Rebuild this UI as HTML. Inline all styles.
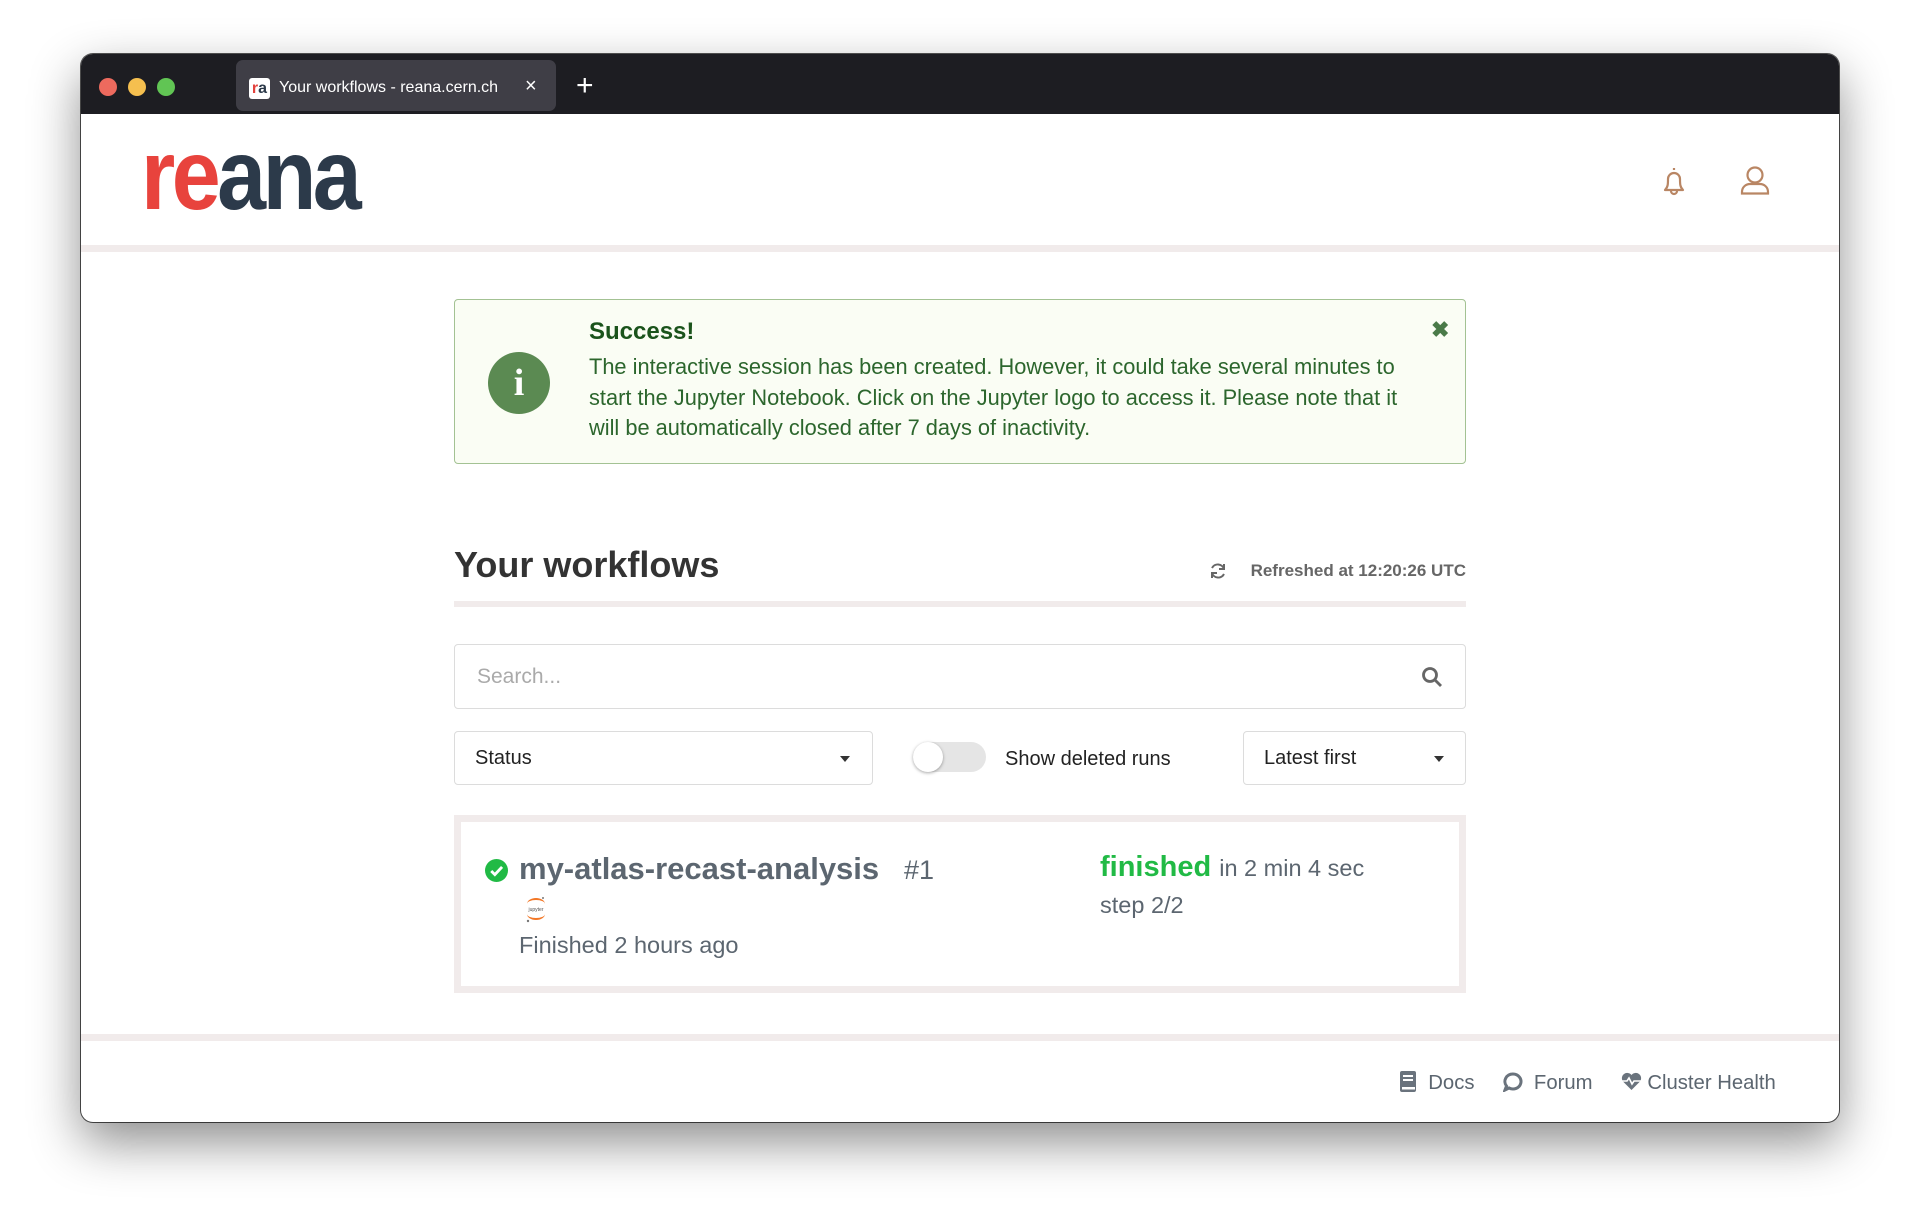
<!DOCTYPE html>
<html><head><meta charset="utf-8"><style>
*{box-sizing:border-box;margin:0;padding:0}
body{width:1920px;height:1229px;background:#fff;font-family:"Liberation Sans",sans-serif;position:relative;overflow:hidden}
.win{position:absolute;left:81px;top:54px;width:1758px;height:1068px;border-radius:12px;background:#fff;box-shadow:0 20px 50px rgba(0,0,0,.45),0 0 0 1px #555;overflow:hidden}
.tb{position:absolute;left:0;top:0;width:100%;height:60px;background:#1d1d22}
.dot{position:absolute;top:24px;width:18px;height:18px;border-radius:50%}
.tab{position:absolute;left:155px;top:6px;width:320px;height:51px;background:#3f3e46;border-radius:7px;color:#fff;font-size:16px}
.abs{position:absolute}
.sep{position:absolute;left:0;width:100%;height:7px;background:#f1ebeb}
.a{position:absolute;left:373px;top:245px;width:1012px;height:165px;background:#fafdf4;border:1.5px solid #a3c293;border-radius:4px;color:#2c662d}
.box{position:absolute;border:1.5px solid #dcdcdc;border-radius:4px;background:#fff;font-size:20px;color:#222}
.caret{position:absolute;width:0;height:0;border-left:5px solid transparent;border-right:5px solid transparent;border-top:6px solid #333}
</style></head><body>
<div class="win">
 <div class="tb">
  <div class="dot" style="left:18px;background:#ed6a5e"></div>
  <div class="dot" style="left:47px;background:#f5bf4f"></div>
  <div class="dot" style="left:76px;background:#61c554"></div>
  <div class="tab">
   <div class="abs" style="left:13px;top:18px;width:21px;height:21px;background:#fff;border-radius:3px;font:bold 16px 'Liberation Sans';line-height:21px;text-align:center"><span style="color:#e2413c">r</span><span style="color:#2c3a4a">a</span></div>
   <div class="abs" style="left:43px;top:19px">Your workflows - reana.cern.ch</div>
   <div class="abs" style="left:289px;top:15px;font-size:20px">×</div>
  </div>
  <div class="abs" style="left:495px;top:15px;color:#fff;font-size:30px;font-weight:300">+</div>
 </div>
 <div class="abs" style="left:60px;top:71px;font:bold 100px/1 'Liberation Sans';letter-spacing:-4px;transform:scaleX(0.88);transform-origin:left top;white-space:nowrap"><span style="color:#e8433d">re</span><span style="color:#2c3a4a">ana</span></div>
 <svg class="abs" style="left:1578px;top:111px" width="30" height="32" viewBox="0 0 30 32" fill="none" stroke="#b98664" stroke-width="2.2" stroke-linejoin="round"><path d="M15 3v2M6 25c3-3 3-6 3-11a6 6 0 0 1 12 0c0 5 0 8 3 11z"/><path d="M12 26a3 3 0 0 0 6 0"/></svg>
 <svg class="abs" style="left:1657px;top:110px" width="34" height="34" viewBox="0 0 34 34" fill="none" stroke="#b98664" stroke-width="2.2"><circle cx="17" cy="11" r="7.5"/><path d="M4 28c0-5 4-8 8-8h10c4 0 8 3 8 8v1.5H4z"/></svg>
 <div class="sep" style="top:191px"></div>

 <div class="a">
  <div class="abs" style="left:33px;top:52px;width:62px;height:62px;border-radius:50%;background:#5b8a52;color:#fff;font:bold 38px/62px 'Liberation Serif';text-align:center">i</div>
  <div class="abs" style="left:134px;top:18px;font-size:24px;font-weight:bold;color:#1a531b">Success!</div>
  <div class="abs" style="left:134px;top:52px;width:880px;font-size:21.8px;line-height:30.6px;color:#2c662d;white-space:nowrap">The interactive session has been created. However, it could take several minutes to<br>start the Jupyter Notebook. Click on the Jupyter logo to access it. Please note that it<br>will be automatically closed after 7 days of inactivity.</div>
  <div class="abs" style="left:976px;top:17px;font-size:22px;font-weight:bold;color:#4a7a48">✖</div>
 </div>

 <div class="abs" style="left:373px;top:490px;font-size:36px;font-weight:bold;color:#333">Your workflows</div>
 <svg class="abs" style="left:1127px;top:507px" width="20" height="20" viewBox="0 0 20 20" fill="none" stroke="#666" stroke-width="2"><path d="M16 8a6.5 6.5 0 0 0-12-1M4 12a6.5 6.5 0 0 0 12 1"/><path d="M16 3v5h-5M4 17v-5h5"/></svg>
 <div class="abs" style="left:1160px;top:507px;width:225px;text-align:right;font-size:17px;font-weight:bold;color:#666">Refreshed at 12:20:26 UTC</div>
 <div class="sep" style="top:547px;left:373px;width:1012px;height:6px"></div>

 <div class="box" style="left:373px;top:590px;width:1012px;height:65px">
  <div class="abs" style="left:22px;top:20px;color:#aaa;font-size:21px">Search...</div>
  <svg class="abs" style="left:965px;top:20px" width="24" height="24" viewBox="0 0 24 24" fill="none" stroke="#666" stroke-width="2.8"><circle cx="10" cy="10" r="6.5"/><path d="M15 15l6 6"/></svg>
 </div>
 <div class="box" style="left:373px;top:677px;width:419px;height:54px"><div class="abs" style="left:20px;top:15px">Status</div><div class="caret" style="left:385px;top:24px"></div></div>
 <div class="abs" style="left:832px;top:688px;width:73px;height:30px;border-radius:15px;background:#e5e5e5"></div>
 <div class="abs" style="left:832px;top:688px;width:30px;height:30px;border-radius:50%;background:#fff;box-shadow:0 1px 3px rgba(0,0,0,.35)"></div>
 <div class="abs" style="left:924px;top:694px;font-size:20px;color:#222">Show deleted runs</div>
 <div class="box" style="left:1162px;top:677px;width:223px;height:54px"><div class="abs" style="left:20px;top:15px">Latest first</div><div class="caret" style="left:190px;top:24px"></div></div>

 <div class="abs" style="left:373px;top:761px;width:1012px;height:178px;border:7px solid #f1ebeb;background:#fff"></div>
 <svg class="abs" style="left:404px;top:805px" width="23" height="23" viewBox="0 0 24 24"><circle cx="12" cy="12" r="12" fill="#21ba45"/><path d="M6.5 12.5l3.8 3.8 7.5-8" fill="none" stroke="#fff" stroke-width="3"/></svg>
 <div class="abs" style="left:438px;top:797px;font-size:31px;font-weight:bold;color:#5c6670">my-atlas-recast-analysis</div>
 <div class="abs" style="left:823px;top:801px;font-size:27px;color:#5c6670">#1</div>
 <svg class="abs" style="left:440px;top:840px" width="30" height="30" viewBox="0 0 30 30"><path d="M6 10a9 6 0 0 1 18 0a9 4 0 0 0-18 0z" fill="#f37726"/><path d="M6 20a9 6 0 0 0 18 0a9 4 0 0 1-18 0z" fill="#f37726"/><text x="15" y="17" font-size="5" text-anchor="middle" fill="#555" font-family="Liberation Sans">jupyter</text><circle cx="7" cy="27" r="1.2" fill="#777"/><circle cx="22" cy="4" r="1" fill="#777"/></svg>
 <div class="abs" style="left:438px;top:878px;font-size:23.5px;color:#5c6670">Finished 2 hours ago</div>
 <div class="abs" style="left:1019px;top:797px;font-size:29px;color:#21ba45;font-weight:bold">finished <span style="font-size:23.5px;font-weight:normal;color:#5c6670">in 2 min 4 sec</span></div>
 <div class="abs" style="left:1019px;top:838px;font-size:23.5px;color:#5c6670">step 2/2</div>

 <div class="sep" style="top:980px"></div>
 <div class="abs" style="left:1318px;top:1017px;font-size:20.3px;color:#5c6670;white-space:nowrap">
  <svg width="18" height="21" viewBox="0 0 18 21" style="vertical-align:-3px"><rect x="1" y="0" width="16" height="21" rx="2" fill="#6a737d"/><rect x="4" y="4" width="10" height="2" fill="#fff"/><rect x="4" y="8" width="10" height="2" fill="#fff"/><rect x="3" y="16" width="13" height="2.5" fill="#fff"/></svg>&nbsp;&nbsp;Docs&nbsp;&nbsp;&nbsp;&nbsp;
  <svg width="20" height="20" viewBox="0 0 20 20" style="vertical-align:-3px"><path d="M10 2a8 7.5 0 1 1-4 14l-4 2 1.5-4A8 7.5 0 0 1 10 2z" fill="none" stroke="#6a737d" stroke-width="3"/></svg>&nbsp;&nbsp;Forum&nbsp;&nbsp;&nbsp;&nbsp;
  <svg width="21" height="19" viewBox="0 0 21 19" style="vertical-align:-2px"><path d="M10.5 18L2 9.5A5 5 0 0 1 10.5 3a5 5 0 0 1 8.5 6.5z" fill="#6a737d"/><path d="M1 9h5l2-3 3 6 2-3h7" fill="none" stroke="#fff" stroke-width="1.6"/></svg>&nbsp;Cluster Health
 </div>
</div>
</body></html>
